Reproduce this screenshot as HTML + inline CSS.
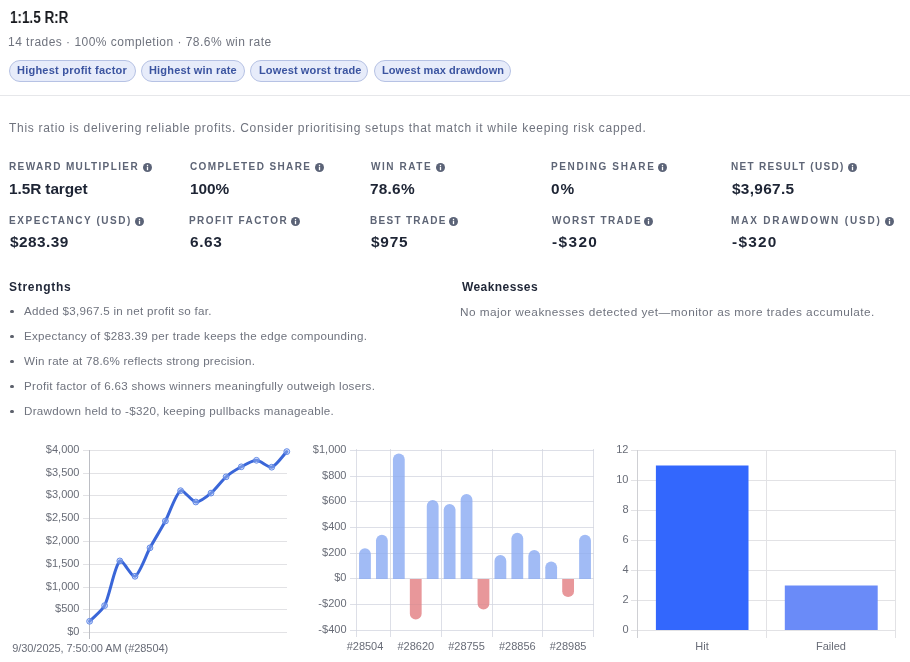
<!DOCTYPE html>
<html><head><meta charset="utf-8"><title>1:1.5 R:R</title>
<style>
html,body{margin:0;padding:0;background:#fff;}
body{width:910px;height:662px;position:relative;overflow:hidden;font-family:"Liberation Sans",sans-serif;-webkit-font-smoothing:antialiased;}
.t{position:absolute;white-space:nowrap;line-height:normal;will-change:transform;}
.title{font-weight:700;color:#15171c;}
.sub{color:#6f737e;}
.pill{position:absolute;top:60px;height:20px;border:1px solid #b6c2e4;background:#e7ecfa;border-radius:11px;}
.pilltxt{font-weight:700;color:#3b54a0;}
.divider{position:absolute;left:0;top:95px;width:910px;height:1px;background:#e6e7ea;}
.label{font-weight:700;color:#5e6576;}
.info{position:absolute;width:9px;height:9px;}
.info svg{display:block;position:static}
.value{font-weight:700;color:#1d2434;}
.head{font-weight:700;color:#1f2637;}
.dot{position:absolute;left:10.4px;width:3.2px;height:3.2px;border-radius:50%;background:#5d616c;}
svg.charts{position:absolute;left:0;top:0;}
.cl{font-family:"Liberation Sans",sans-serif;font-size:11px;fill:#686c77;}
</style></head><body>
<div class="t title" style="left:10.00px;top:9.40px;font-size:15.8px;transform:scaleX(0.8527);transform-origin:0 0">1:1.5 R:R</div>
<div class="t sub" style="left:8.25px;top:34.80px;font-size:12px;letter-spacing:0.475px">14 trades · 100% completion · 78.6% win rate</div>
<div class="pill" style="left:9.0px;width:124.5px"></div>
<div class="t pilltxt" style="left:17.00px;top:64.20px;font-size:11px;letter-spacing:0.233px">Highest profit factor</div>
<div class="pill" style="left:141.0px;width:101.7px"></div>
<div class="t pilltxt" style="left:149.00px;top:64.20px;font-size:11px;letter-spacing:0.181px">Highest win rate</div>
<div class="pill" style="left:250.4px;width:116.0px"></div>
<div class="t pilltxt" style="left:258.50px;top:64.20px;font-size:11px;letter-spacing:0.131px">Lowest worst trade</div>
<div class="pill" style="left:373.8px;width:135.4px"></div>
<div class="t pilltxt" style="left:382.25px;top:64.20px;font-size:11px;letter-spacing:0.091px">Lowest max drawdown</div>
<div class="divider"></div>
<div class="t sub" style="left:9.25px;top:120.80px;font-size:12px;letter-spacing:0.707px">This ratio is delivering reliable profits. Consider prioritising setups that match it while keeping risk capped.</div>
<div class="t label" style="left:8.75px;top:161.00px;font-size:10px;letter-spacing:1.383px">REWARD MULTIPLIER</div>
<div class="info" style="left:142.90px;top:162.90px"><svg width="9" height="9" viewBox="0 0 9 9"><circle cx="4.5" cy="4.5" r="4.5" fill="#5b6377"/><rect x="3.85" y="3.7" width="1.3" height="3.5" fill="#fff"/><rect x="3.85" y="1.8" width="1.3" height="1.2" fill="#fff"/></svg></div>
<div class="t label" style="left:190.00px;top:161.00px;font-size:10px;letter-spacing:1.385px">COMPLETED SHARE</div>
<div class="info" style="left:314.50px;top:162.90px"><svg width="9" height="9" viewBox="0 0 9 9"><circle cx="4.5" cy="4.5" r="4.5" fill="#5b6377"/><rect x="3.85" y="3.7" width="1.3" height="3.5" fill="#fff"/><rect x="3.85" y="1.8" width="1.3" height="1.2" fill="#fff"/></svg></div>
<div class="t label" style="left:370.50px;top:161.00px;font-size:10px;letter-spacing:1.553px">WIN RATE</div>
<div class="info" style="left:435.50px;top:162.90px"><svg width="9" height="9" viewBox="0 0 9 9"><circle cx="4.5" cy="4.5" r="4.5" fill="#5b6377"/><rect x="3.85" y="3.7" width="1.3" height="3.5" fill="#fff"/><rect x="3.85" y="1.8" width="1.3" height="1.2" fill="#fff"/></svg></div>
<div class="t label" style="left:550.50px;top:161.00px;font-size:10px;letter-spacing:1.624px">PENDING SHARE</div>
<div class="info" style="left:658.30px;top:162.90px"><svg width="9" height="9" viewBox="0 0 9 9"><circle cx="4.5" cy="4.5" r="4.5" fill="#5b6377"/><rect x="3.85" y="3.7" width="1.3" height="3.5" fill="#fff"/><rect x="3.85" y="1.8" width="1.3" height="1.2" fill="#fff"/></svg></div>
<div class="t label" style="left:731.00px;top:161.00px;font-size:10px;letter-spacing:1.318px">NET RESULT (USD)</div>
<div class="info" style="left:847.80px;top:162.90px"><svg width="9" height="9" viewBox="0 0 9 9"><circle cx="4.5" cy="4.5" r="4.5" fill="#5b6377"/><rect x="3.85" y="3.7" width="1.3" height="3.5" fill="#fff"/><rect x="3.85" y="1.8" width="1.3" height="1.2" fill="#fff"/></svg></div>
<div class="t label" style="left:9.00px;top:215.00px;font-size:10px;letter-spacing:1.565px">EXPECTANCY (USD)</div>
<div class="info" style="left:135.30px;top:216.90px"><svg width="9" height="9" viewBox="0 0 9 9"><circle cx="4.5" cy="4.5" r="4.5" fill="#5b6377"/><rect x="3.85" y="3.7" width="1.3" height="3.5" fill="#fff"/><rect x="3.85" y="1.8" width="1.3" height="1.2" fill="#fff"/></svg></div>
<div class="t label" style="left:189.25px;top:215.00px;font-size:10px;letter-spacing:1.438px">PROFIT FACTOR</div>
<div class="info" style="left:290.90px;top:216.90px"><svg width="9" height="9" viewBox="0 0 9 9"><circle cx="4.5" cy="4.5" r="4.5" fill="#5b6377"/><rect x="3.85" y="3.7" width="1.3" height="3.5" fill="#fff"/><rect x="3.85" y="1.8" width="1.3" height="1.2" fill="#fff"/></svg></div>
<div class="t label" style="left:369.50px;top:215.00px;font-size:10px;letter-spacing:1.289px">BEST TRADE</div>
<div class="info" style="left:449.20px;top:216.90px"><svg width="9" height="9" viewBox="0 0 9 9"><circle cx="4.5" cy="4.5" r="4.5" fill="#5b6377"/><rect x="3.85" y="3.7" width="1.3" height="3.5" fill="#fff"/><rect x="3.85" y="1.8" width="1.3" height="1.2" fill="#fff"/></svg></div>
<div class="t label" style="left:551.50px;top:215.00px;font-size:10px;letter-spacing:1.412px">WORST TRADE</div>
<div class="info" style="left:644.10px;top:216.90px"><svg width="9" height="9" viewBox="0 0 9 9"><circle cx="4.5" cy="4.5" r="4.5" fill="#5b6377"/><rect x="3.85" y="3.7" width="1.3" height="3.5" fill="#fff"/><rect x="3.85" y="1.8" width="1.3" height="1.2" fill="#fff"/></svg></div>
<div class="t label" style="left:731.00px;top:215.00px;font-size:10px;letter-spacing:1.830px">MAX DRAWDOWN (USD)</div>
<div class="info" style="left:885.20px;top:216.90px"><svg width="9" height="9" viewBox="0 0 9 9"><circle cx="4.5" cy="4.5" r="4.5" fill="#5b6377"/><rect x="3.85" y="3.7" width="1.3" height="3.5" fill="#fff"/><rect x="3.85" y="1.8" width="1.3" height="1.2" fill="#fff"/></svg></div>
<div class="t value" style="left:8.75px;top:179.60px;font-size:15.4px;letter-spacing:-0.087px">1.5R target</div>
<div class="t value" style="left:190.00px;top:179.60px;font-size:15.4px;letter-spacing:-0.018px">100%</div>
<div class="t value" style="left:370.00px;top:179.60px;font-size:15.4px;letter-spacing:0.231px">78.6%</div>
<div class="t value" style="left:550.50px;top:179.60px;font-size:15.4px;letter-spacing:0.840px">0%</div>
<div class="t value" style="left:732.00px;top:179.60px;font-size:15.4px;letter-spacing:0.304px">$3,967.5</div>
<div class="t value" style="left:10.00px;top:233.40px;font-size:15.4px;letter-spacing:0.447px">$283.39</div>
<div class="t value" style="left:190.00px;top:233.40px;font-size:15.4px;letter-spacing:0.582px">6.63</div>
<div class="t value" style="left:370.50px;top:233.40px;font-size:15.4px;letter-spacing:0.790px">$975</div>
<div class="t value" style="left:551.50px;top:233.40px;font-size:15.4px;letter-spacing:1.389px">-$320</div>
<div class="t value" style="left:732.00px;top:233.40px;font-size:15.4px;letter-spacing:1.254px">-$320</div>
<div class="t head" style="left:9.25px;top:279.80px;font-size:12px;letter-spacing:0.714px">Strengths</div>
<div class="t head" style="left:461.50px;top:279.80px;font-size:12px;letter-spacing:0.416px">Weaknesses</div>
<div class="dot" style="top:309.8px"></div>
<div class="t sub" style="left:23.50px;top:303.90px;font-size:11.6px;letter-spacing:0.292px">Added $3,967.5 in net profit so far.</div>
<div class="dot" style="top:334.8px"></div>
<div class="t sub" style="left:23.50px;top:328.90px;font-size:11.6px;letter-spacing:0.289px">Expectancy of $283.39 per trade keeps the edge compounding.</div>
<div class="dot" style="top:359.8px"></div>
<div class="t sub" style="left:23.70px;top:353.90px;font-size:11.6px;letter-spacing:0.229px">Win rate at 78.6% reflects strong precision.</div>
<div class="dot" style="top:384.8px"></div>
<div class="t sub" style="left:23.50px;top:378.90px;font-size:11.6px;letter-spacing:0.287px">Profit factor of 6.63 shows winners meaningfully outweigh losers.</div>
<div class="dot" style="top:409.8px"></div>
<div class="t sub" style="left:23.50px;top:403.90px;font-size:11.6px;letter-spacing:0.294px">Drawdown held to -$320, keeping pullbacks manageable.</div>
<div class="t sub" style="left:460.25px;top:304.90px;font-size:11.8px;letter-spacing:0.467px">No major weaknesses detected yet—monitor as more trades accumulate.</div>
<svg class="charts" width="910" height="662" viewBox="0 0 910 662">
<line x1="83" x2="287" y1="450.5" y2="450.5" stroke="#e2e2e5" stroke-width="1"/>
<text x="79.5" y="453.4" text-anchor="end" class="cl">$4,000</text>
<line x1="83" x2="287" y1="473.5" y2="473.5" stroke="#e2e2e5" stroke-width="1"/>
<text x="79.5" y="476.4" text-anchor="end" class="cl">$3,500</text>
<line x1="83" x2="287" y1="495.5" y2="495.5" stroke="#e2e2e5" stroke-width="1"/>
<text x="79.5" y="498.4" text-anchor="end" class="cl">$3,000</text>
<line x1="83" x2="287" y1="518.5" y2="518.5" stroke="#e2e2e5" stroke-width="1"/>
<text x="79.5" y="521.4" text-anchor="end" class="cl">$2,500</text>
<line x1="83" x2="287" y1="541.5" y2="541.5" stroke="#e2e2e5" stroke-width="1"/>
<text x="79.5" y="544.4" text-anchor="end" class="cl">$2,000</text>
<line x1="83" x2="287" y1="564.5" y2="564.5" stroke="#e2e2e5" stroke-width="1"/>
<text x="79.5" y="567.4" text-anchor="end" class="cl">$1,500</text>
<line x1="83" x2="287" y1="587.5" y2="587.5" stroke="#e2e2e5" stroke-width="1"/>
<text x="79.5" y="590.4" text-anchor="end" class="cl">$1,000</text>
<line x1="83" x2="287" y1="609.5" y2="609.5" stroke="#e2e2e5" stroke-width="1"/>
<text x="79.5" y="612.4" text-anchor="end" class="cl">$500</text>
<line x1="83" x2="287" y1="632.5" y2="632.5" stroke="#e2e2e5" stroke-width="1"/>
<text x="79.5" y="635.4" text-anchor="end" class="cl">$0</text>
<line x1="89.5" x2="89.5" y1="450" y2="639" stroke="#bcbec4" stroke-width="1"/>
<text x="12.2" y="651.9" class="cl" textLength="156" lengthAdjust="spacing">9/30/2025, 7:50:00 AM (#28504)</text>
<path d="M89.60,621.30 C93.35,617.38 102.22,610.36 104.60,605.60 C109.77,595.26 114.59,565.92 119.80,560.90 C122.19,558.60 131.97,577.62 135.00,576.30 C139.52,574.34 146.12,554.85 150.00,547.80 C153.72,541.03 161.75,527.81 165.40,521.00 C169.40,513.53 175.72,493.75 180.60,490.70 C183.32,489.00 191.86,501.69 195.80,502.00 C199.46,502.29 207.65,495.89 211.00,493.10 C215.23,489.59 221.94,480.41 226.10,476.80 C229.51,473.84 237.32,468.96 241.30,466.80 C244.92,464.84 252.72,460.25 256.50,460.30 C260.32,460.35 268.41,468.15 271.70,467.20 C275.98,465.97 283.02,455.50 286.80,451.60" fill="none" stroke="#3a66d8" stroke-width="3" stroke-linejoin="round" stroke-linecap="round"/>
<circle cx="89.6" cy="621.3" r="2.9" fill="#a9bff4" fill-opacity="0.45" stroke="#6088e6" stroke-width="1"/>
<circle cx="104.6" cy="605.6" r="2.9" fill="#a9bff4" fill-opacity="0.45" stroke="#6088e6" stroke-width="1"/>
<circle cx="119.8" cy="560.9" r="2.9" fill="#a9bff4" fill-opacity="0.45" stroke="#6088e6" stroke-width="1"/>
<circle cx="135.0" cy="576.3" r="2.9" fill="#a9bff4" fill-opacity="0.45" stroke="#6088e6" stroke-width="1"/>
<circle cx="150.0" cy="547.8" r="2.9" fill="#a9bff4" fill-opacity="0.45" stroke="#6088e6" stroke-width="1"/>
<circle cx="165.4" cy="521.0" r="2.9" fill="#a9bff4" fill-opacity="0.45" stroke="#6088e6" stroke-width="1"/>
<circle cx="180.6" cy="490.7" r="2.9" fill="#a9bff4" fill-opacity="0.45" stroke="#6088e6" stroke-width="1"/>
<circle cx="195.8" cy="502.0" r="2.9" fill="#a9bff4" fill-opacity="0.45" stroke="#6088e6" stroke-width="1"/>
<circle cx="211.0" cy="493.1" r="2.9" fill="#a9bff4" fill-opacity="0.45" stroke="#6088e6" stroke-width="1"/>
<circle cx="226.1" cy="476.8" r="2.9" fill="#a9bff4" fill-opacity="0.45" stroke="#6088e6" stroke-width="1"/>
<circle cx="241.3" cy="466.8" r="2.9" fill="#a9bff4" fill-opacity="0.45" stroke="#6088e6" stroke-width="1"/>
<circle cx="256.5" cy="460.3" r="2.9" fill="#a9bff4" fill-opacity="0.45" stroke="#6088e6" stroke-width="1"/>
<circle cx="271.7" cy="467.2" r="2.9" fill="#a9bff4" fill-opacity="0.45" stroke="#6088e6" stroke-width="1"/>
<circle cx="286.8" cy="451.6" r="2.9" fill="#a9bff4" fill-opacity="0.45" stroke="#6088e6" stroke-width="1"/>
<line x1="350" x2="594" y1="450.5" y2="450.5" stroke="#e5e7ed" stroke-width="1"/>
<line x1="350" x2="594" y1="476.5" y2="476.5" stroke="#e5e7ed" stroke-width="1"/>
<line x1="350" x2="594" y1="501.5" y2="501.5" stroke="#e5e7ed" stroke-width="1"/>
<line x1="350" x2="594" y1="527.5" y2="527.5" stroke="#e5e7ed" stroke-width="1"/>
<line x1="350" x2="594" y1="553.5" y2="553.5" stroke="#e5e7ed" stroke-width="1"/>
<line x1="350" x2="594" y1="578.5" y2="578.5" stroke="#e5e7ed" stroke-width="1"/>
<line x1="350" x2="594" y1="604.5" y2="604.5" stroke="#e5e7ed" stroke-width="1"/>
<line x1="350" x2="594" y1="630.5" y2="630.5" stroke="#e5e7ed" stroke-width="1"/>
<line x1="356.5" x2="356.5" y1="449" y2="637" stroke="#e5e7ed" stroke-width="1"/>
<line x1="390.5" x2="390.5" y1="449" y2="637" stroke="#e5e7ed" stroke-width="1"/>
<line x1="441.5" x2="441.5" y1="449" y2="637" stroke="#e5e7ed" stroke-width="1"/>
<line x1="492.5" x2="492.5" y1="449" y2="637" stroke="#e5e7ed" stroke-width="1"/>
<line x1="542.5" x2="542.5" y1="449" y2="637" stroke="#e5e7ed" stroke-width="1"/>
<line x1="593.5" x2="593.5" y1="449" y2="637" stroke="#e5e7ed" stroke-width="1"/>
<path d="M359.06,579.0 L359.06,554.10 A5.90,5.90 0 0 1 370.86,554.10 L370.86,579.0 Z" fill="#a1bbf5"/>
<path d="M375.99,579.0 L375.99,540.60 A5.90,5.90 0 0 1 387.79,540.60 L387.79,579.0 Z" fill="#a1bbf5"/>
<path d="M392.92,579.0 L392.92,459.50 A5.90,5.90 0 0 1 404.72,459.50 L404.72,579.0 Z" fill="#a1bbf5"/>
<path d="M409.85,579.0 L421.65,579.0 L421.65,613.70 A5.90,5.90 0 0 1 409.85,613.70 Z" fill="#e8979a"/>
<path d="M426.78,579.0 L426.78,506.00 A5.90,5.90 0 0 1 438.58,506.00 L438.58,579.0 Z" fill="#a1bbf5"/>
<path d="M443.71,579.0 L443.71,509.90 A5.90,5.90 0 0 1 455.51,509.90 L455.51,579.0 Z" fill="#a1bbf5"/>
<path d="M460.64,579.0 L460.64,499.90 A5.90,5.90 0 0 1 472.44,499.90 L472.44,579.0 Z" fill="#a1bbf5"/>
<path d="M477.56,579.0 L489.36,579.0 L489.36,603.60 A5.90,5.90 0 0 1 477.56,603.60 Z" fill="#e8979a"/>
<path d="M494.49,579.0 L494.49,560.90 A5.90,5.90 0 0 1 506.29,560.90 L506.29,579.0 Z" fill="#a1bbf5"/>
<path d="M511.42,579.0 L511.42,538.60 A5.90,5.90 0 0 1 523.22,538.60 L523.22,579.0 Z" fill="#a1bbf5"/>
<path d="M528.35,579.0 L528.35,555.90 A5.90,5.90 0 0 1 540.15,555.90 L540.15,579.0 Z" fill="#a1bbf5"/>
<path d="M545.28,579.0 L545.28,567.30 A5.90,5.90 0 0 1 557.08,567.30 L557.08,579.0 Z" fill="#a1bbf5"/>
<path d="M562.21,579.0 L574.01,579.0 L574.01,591.20 A5.90,5.90 0 0 1 562.21,591.20 Z" fill="#e8979a"/>
<path d="M579.14,579.0 L579.14,540.60 A5.90,5.90 0 0 1 590.94,540.60 L590.94,579.0 Z" fill="#a1bbf5"/>
<line x1="350" x2="594" y1="450.5" y2="450.5" stroke="rgba(30,40,90,0.04)" stroke-width="1"/>
<text x="346.5" y="453.4" text-anchor="end" class="cl">$1,000</text>
<line x1="350" x2="594" y1="476.5" y2="476.5" stroke="rgba(30,40,90,0.04)" stroke-width="1"/>
<text x="346.5" y="479.4" text-anchor="end" class="cl">$800</text>
<line x1="350" x2="594" y1="501.5" y2="501.5" stroke="rgba(30,40,90,0.04)" stroke-width="1"/>
<text x="346.5" y="504.4" text-anchor="end" class="cl">$600</text>
<line x1="350" x2="594" y1="527.5" y2="527.5" stroke="rgba(30,40,90,0.04)" stroke-width="1"/>
<text x="346.5" y="530.4" text-anchor="end" class="cl">$400</text>
<line x1="350" x2="594" y1="553.5" y2="553.5" stroke="rgba(30,40,90,0.04)" stroke-width="1"/>
<text x="346.5" y="556.4" text-anchor="end" class="cl">$200</text>
<line x1="350" x2="594" y1="578.5" y2="578.5" stroke="rgba(30,40,90,0.04)" stroke-width="1"/>
<text x="346.5" y="581.4" text-anchor="end" class="cl">$0</text>
<line x1="350" x2="594" y1="604.5" y2="604.5" stroke="rgba(30,40,90,0.04)" stroke-width="1"/>
<text x="346.5" y="607.4" text-anchor="end" class="cl">-$200</text>
<line x1="350" x2="594" y1="630.5" y2="630.5" stroke="rgba(30,40,90,0.04)" stroke-width="1"/>
<text x="346.5" y="633.4" text-anchor="end" class="cl">-$400</text>
<line x1="356.5" x2="356.5" y1="449" y2="637" stroke="rgba(30,40,90,0.04)" stroke-width="1"/>
<line x1="390.5" x2="390.5" y1="449" y2="637" stroke="rgba(30,40,90,0.04)" stroke-width="1"/>
<line x1="441.5" x2="441.5" y1="449" y2="637" stroke="rgba(30,40,90,0.04)" stroke-width="1"/>
<line x1="492.5" x2="492.5" y1="449" y2="637" stroke="rgba(30,40,90,0.04)" stroke-width="1"/>
<line x1="542.5" x2="542.5" y1="449" y2="637" stroke="rgba(30,40,90,0.04)" stroke-width="1"/>
<line x1="593.5" x2="593.5" y1="449" y2="637" stroke="rgba(30,40,90,0.04)" stroke-width="1"/>
<text x="365.0" y="649.6" text-anchor="middle" class="cl">#28504</text>
<text x="415.8" y="649.6" text-anchor="middle" class="cl">#28620</text>
<text x="466.5" y="649.6" text-anchor="middle" class="cl">#28755</text>
<text x="517.3" y="649.6" text-anchor="middle" class="cl">#28856</text>
<text x="568.1" y="649.6" text-anchor="middle" class="cl">#28985</text>
<line x1="631" x2="896" y1="450.5" y2="450.5" stroke="#e2e2e5" stroke-width="1"/>
<text x="628.5" y="453.4" text-anchor="end" class="cl">12</text>
<line x1="631" x2="896" y1="480.5" y2="480.5" stroke="#e2e2e5" stroke-width="1"/>
<text x="628.5" y="483.4" text-anchor="end" class="cl">10</text>
<line x1="631" x2="896" y1="510.5" y2="510.5" stroke="#e2e2e5" stroke-width="1"/>
<text x="628.5" y="513.4" text-anchor="end" class="cl">8</text>
<line x1="631" x2="896" y1="540.5" y2="540.5" stroke="#e2e2e5" stroke-width="1"/>
<text x="628.5" y="543.4" text-anchor="end" class="cl">6</text>
<line x1="631" x2="896" y1="570.5" y2="570.5" stroke="#e2e2e5" stroke-width="1"/>
<text x="628.5" y="573.4" text-anchor="end" class="cl">4</text>
<line x1="631" x2="896" y1="600.5" y2="600.5" stroke="#e2e2e5" stroke-width="1"/>
<text x="628.5" y="603.4" text-anchor="end" class="cl">2</text>
<line x1="631" x2="896" y1="630.5" y2="630.5" stroke="#e2e2e5" stroke-width="1"/>
<text x="628.5" y="633.4" text-anchor="end" class="cl">0</text>
<line x1="637.5" x2="637.5" y1="450" y2="638" stroke="#cfd0d4" stroke-width="1"/>
<line x1="766.5" x2="766.5" y1="450" y2="638" stroke="#e2e2e5" stroke-width="1"/>
<line x1="895.5" x2="895.5" y1="450" y2="638" stroke="#e2e2e5" stroke-width="1"/>
<rect x="655.9" y="465.5" width="92.6" height="164.5" fill="#3367fd"/>
<rect x="784.8" y="585.5" width="92.9" height="44.5" fill="#6a8bf8"/>
<text x="702" y="649.6" text-anchor="middle" class="cl">Hit</text>
<text x="831" y="649.6" text-anchor="middle" class="cl">Failed</text>
</svg>
</body></html>
